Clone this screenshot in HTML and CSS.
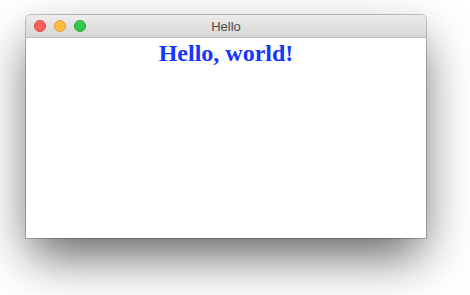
FILE: index.html
```html
<!DOCTYPE html>
<html lang="en">
<head>
    <meta charset="UTF-8">
    <title>Hello</title>
    <link rel="stylesheet" href="styles.css">
</head>
<body>
    <div class="window">
        <div class="titlebar">
            <div class="lights">
                <span class="light close"></span>
                <span class="light min"></span>
                <span class="light max"></span>
            </div>
            <div class="title">Hello</div>
        </div>
        <div class="content">
            <h1>Hello, world!</h1>
        </div>
    </div>
</body>
</html>
```

FILE: styles.css
```css
html {
    height: 100%;
}
body {
    margin: 0;
    min-height: 100%;
    box-sizing: border-box;
    background-color: #ffffff;
    padding: 15px 0 0 26px;
    font-family: 'Liberation Sans', Arial, sans-serif;
}
.window {
    width: 400px;
    border-radius: 5px 5px 0 0;
    box-shadow: 0 0 0 1px rgba(0, 0, 0, 0.22), 0 22px 50px -4px rgba(0, 0, 0, 0.62);
    background-color: white;
}
.titlebar {
    position: relative;
    height: 22px;
    background: linear-gradient(#ececec, #d6d6d6);
    border-bottom: 1px solid #bdbdbd;
    border-radius: 5px 5px 0 0;
    display: flex;
    align-items: center;
    justify-content: center;
}
.lights {
    position: absolute;
    left: 8px;
    top: 5px;
    display: flex;
    gap: 8px;
}
.light {
    width: 12px;
    height: 12px;
    border-radius: 50%;
    box-sizing: border-box;
}
.close {
    background-color: #fc605c;
    border: 1px solid #de4844;
}
.min {
    background-color: #fdbc40;
    border: 1px solid #dea032;
}
.max {
    background-color: #34c84a;
    border: 1px solid #27aa36;
}
.title {
    font-size: 13px;
    color: #4d4d4d;
}
.content {
    height: 200px;
    text-align: center;
}
h1 {
    margin: 0;
    padding-top: 2px;
    font-family: 'Liberation Serif', 'Times New Roman', serif;
    font-size: 24px;
    font-weight: bold;
    color: #1436ff;
}
```
